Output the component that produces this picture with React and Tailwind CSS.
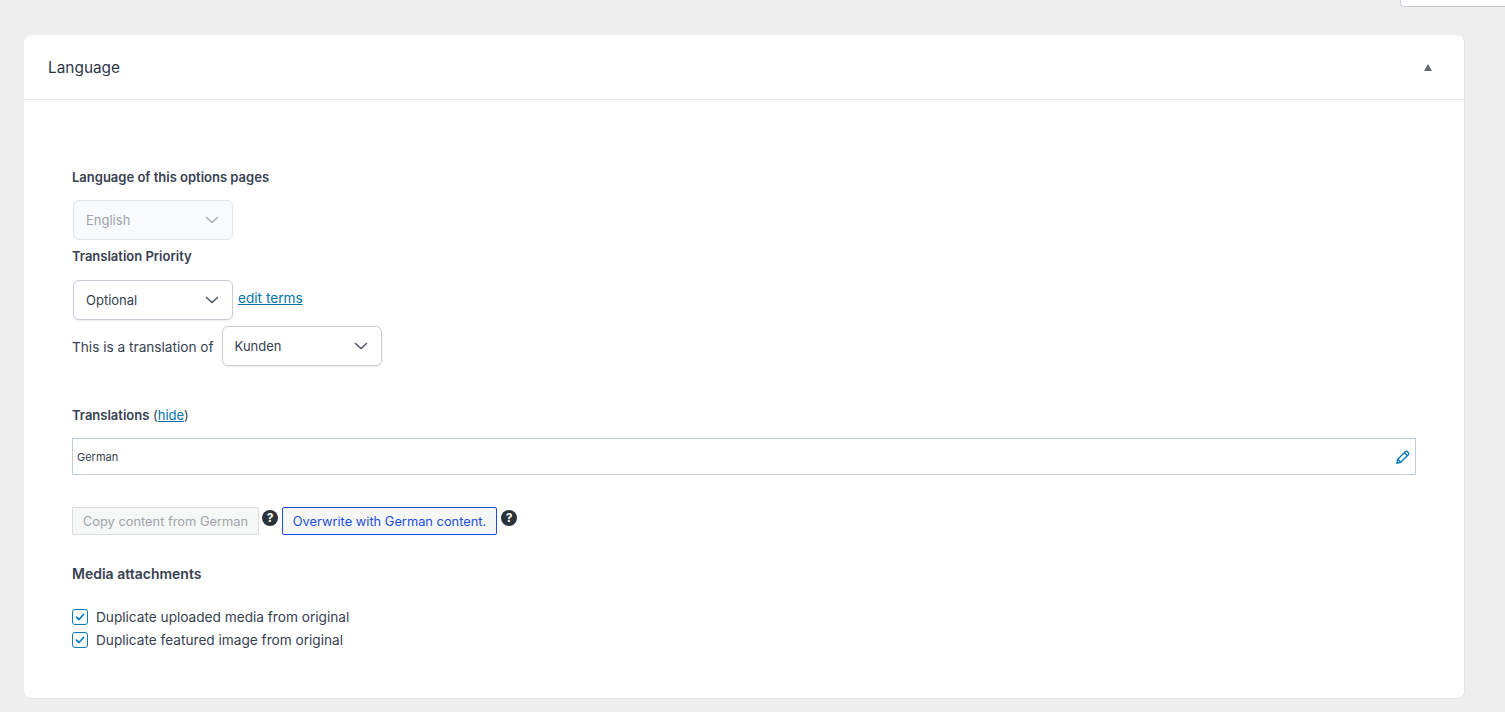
import React from 'react';

const Chevron = ({ className }) => (
    <svg className={className} width="16" height="16" viewBox="0 0 16 16" fill="none" stroke="currentColor" strokeWidth="1.5" strokeLinecap="round" strokeLinejoin="round">
        <path d="M2.5 5.5 8 10.5l5.5-5" />
    </svg>
);

const Select = ({ value, disabled }) => (
    <div className={`flex h-10 w-40 shrink-0 items-center justify-between rounded-md border pl-3 pr-[12px] text-[13px] ${disabled ? 'border-[#e2e4e7] bg-[#f9fafb] text-[#9ca3af] shadow-none' : 'border-[#c9ced6] bg-white text-[#374151] shadow-[0_1px_2px_rgba(0,0,0,0.08)]'}`}>
        <span className="mt-[2px]">{value}</span>
        <Chevron className={disabled ? 'text-[#a8adb5]' : 'text-[#4b5563]'} />
    </div>
);

const Help = () => (
    <span className="flex h-4 w-4 shrink-0 items-center justify-center rounded-full bg-[#2c3338] text-xs font-bold leading-none text-white">?</span>
);

const Check = ({ label }) => (
    <label className="flex h-[23px] items-center gap-2 text-[13.65px] text-[#374151]">
        <span className="flex h-4 w-4 items-center justify-center rounded-[3px] border-[1.5px] border-[#0a7cb8] bg-white">
            <svg width="10" height="10" viewBox="0 0 10 10" fill="none" stroke="#0a7cb8" strokeWidth="1.8" strokeLinecap="round" strokeLinejoin="round">
                <path d="M1.5 5.2 4 7.5l4.5-5" />
            </svg>
        </span>
        <span className="mt-[2px]">{label}</span>
    </label>
);

export default function App() {
    return (
        <div className="h-[712px] overflow-hidden bg-[#eeeeee] font-['Inter',sans-serif]">
            <div className="flex h-[7px] justify-end">
                <div className="w-[105px] rounded-bl-[4px] border-b border-l border-[#c9ced6] bg-white" />
            </div>
            <div className="ml-6 mt-7 h-[664px] w-[1441px] rounded-lg border-r border-b border-[#e2e4e7] bg-white">
                <div className="flex h-[65px] items-center justify-between border-b border-[#e5e7eb] pl-6 pr-[32px]">
                    <h2 className="mt-[2px] text-[15.4px] font-normal text-[#2d3748]">Language</h2>
                    <span className="h-0 w-0 border-x-[4px] border-b-[7px] border-x-transparent border-b-[#646970]" />
                </div>
                <div className="pl-12 pr-12 pt-[67px]">
                    <div className="text-[13px] font-semibold leading-5 text-[#374151]">Language of this options pages</div>
                    <div className="ml-px mt-[13px]">
                        <Select value="English" disabled />
                    </div>
                    <div className="mt-[6px] text-[13px] font-semibold leading-5 text-[#374151]">Translation Priority</div>
                    <div className="ml-px mt-[14px] flex items-center gap-[5px]">
                        <Select value="Optional" />
                        <a className="-mt-[4px] text-[13.65px] text-[#0073aa] underline">edit terms</a>
                    </div>
                    <div className="mt-[6px] flex items-center gap-2 text-[13.65px] text-[#374151]">
                        <span className="mt-[2px]">This is a translation of</span>
                        <Select value="Kunden" />
                    </div>
                    <div className="mt-[39px] text-[13px] leading-5 text-[#374151]">
                        <span className="font-semibold">Translations</span> (<a className="text-[#0073aa] underline">hide</a>)
                    </div>
                    <div className="mt-[13px] flex h-[37px] w-[1344px] items-center justify-between border border-[#c3cdd5] pl-1 pr-[4px] text-[11px] text-[#374151]">
                        <span className="mt-[2px]">German</span>
                        <svg width="16" height="16" viewBox="0 0 16 16" fill="none" stroke="#0a7cb8" strokeWidth="1.4" strokeLinejoin="round">
                            <path d="M1.8 14.2l.9-3.9 7.6-7.6a1.5 1.5 0 0 1 2.1 0l.9.9a1.5 1.5 0 0 1 0 2.1l-7.6 7.6-3.9.9zM9.3 3.7l3 3M2.7 10.3l3 3" />
                        </svg>
                    </div>
                    <div className="mt-8 flex items-start text-[12.85px]">
                        <span className="flex h-7 w-[187px] items-center justify-center rounded-[2px] border border-[#dcdcde] bg-[#f6f7f7] pt-[2px] text-[#a0a5aa]">Copy content from German</span>
                        <span className="ml-[3px] mt-[3px]"><Help /></span>
                        <span className="ml-[4px] flex h-7 w-[215px] items-center justify-center rounded-[2px] border border-[#1d4ed8] bg-[#f6f7f7] pt-[2px] text-[#1d4ed8]">Overwrite with German content.</span>
                        <span className="ml-[4px] mt-[3px]"><Help /></span>
                    </div>
                    <div className="mt-[29px] text-sm font-semibold leading-5 text-[#374151]">Media attachments</div>
                    <div className="mt-[21px]">
                        <Check label="Duplicate uploaded media from original" />
                        <Check label="Duplicate featured image from original" />
                    </div>
                </div>
            </div>
        </div>
    );
}
